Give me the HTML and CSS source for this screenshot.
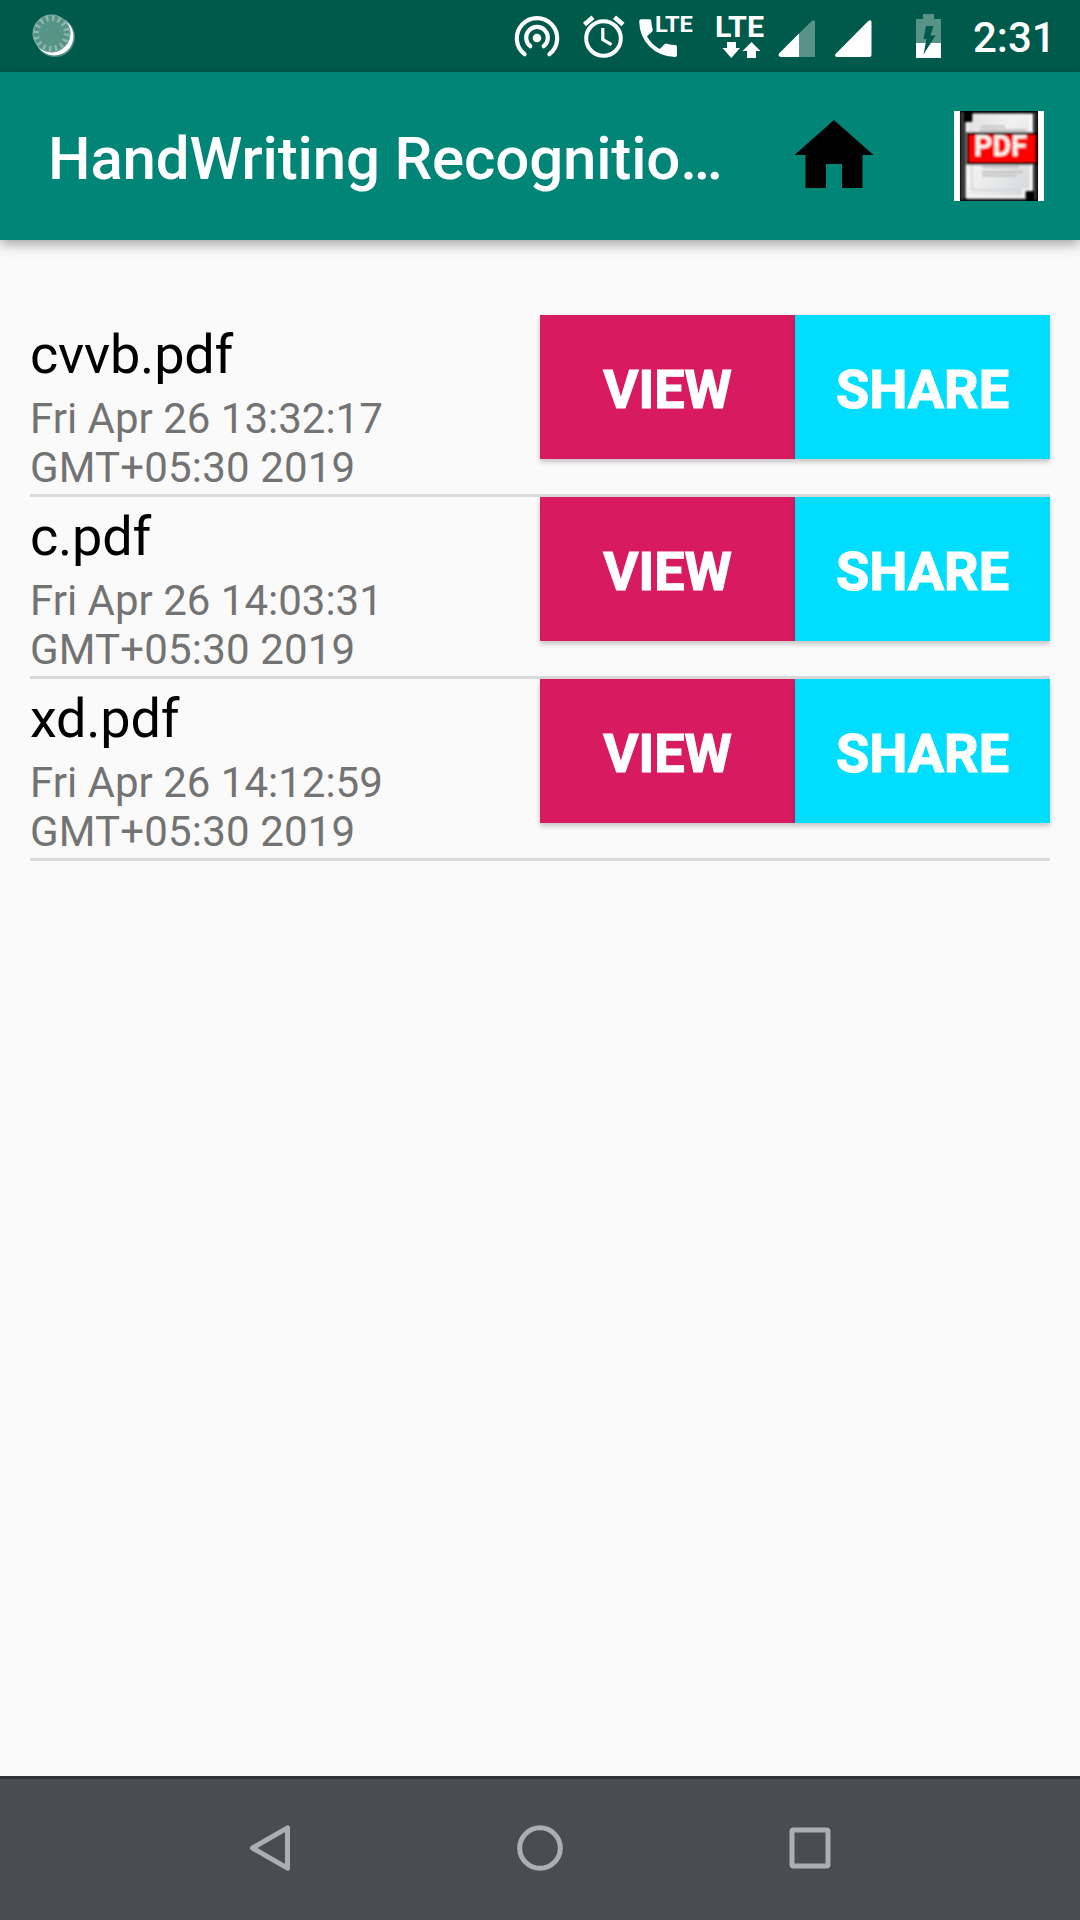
FILE: index.html
```html
<!DOCTYPE html>
<html lang="en">
<head>
<meta charset="utf-8">
<title>HandWriting Recognition</title>
<link rel="stylesheet" href="styles.css">
</head>
<body>
<div class="screen">
  <header class="status">
    <svg class="status-icons" viewBox="0 0 960 72" width="960" height="72" aria-hidden="true">
      <!-- sync spinner -->
      <circle cx="55" cy="37" r="20" fill="#4d8c80"/>
      <circle cx="54.3" cy="36.3" r="19.2" fill="#fff"/>
      <circle cx="51.5" cy="33.500" r="18.900" fill="#589387"/>
      <circle cx="51.5" cy="33.500" r="15.500" fill="none" stroke="#8db7ae" stroke-width="6" stroke-dasharray="2.4 3.69"/>
      <circle cx="51.5" cy="33.500" r="18.400" fill="none" stroke="#7ba99f" stroke-width="1"/>
      <!-- hotspot -->
      <g fill="none" stroke="#fff" stroke-width="4.2" stroke-linecap="round">
        <path d="M524.6 54.2A20.2 20.2 0 1 1 549.4 54.2"/>
        <path d="M530.3 46.2A10.8 10.8 0 1 1 543.7 46.2"/>
      </g>
      <circle cx="537" cy="38" r="4.3" fill="#fff"/>
      <!-- alarm -->
      <g fill="none" stroke="#fff">
        <circle cx="603.5" cy="38.5" r="17.3" stroke-width="4"/>
        <path d="M602.8 28V39.5L611.5 44.7" stroke-width="3.2"/>
        <path d="M584.5 24.5L593 17.2M614.5 17.2L623 24.5" stroke-width="4.6"/>
      </g>
      <!-- call over LTE -->
      <path fill="#fff" d="M641.2 19.3H649.5Q651.2 19.3 651.3 21Q651.5 25.5 652.7 29.3Q653 30.6 652 31.7L647 36.3Q651.3 44.6 659.7 49L664.7 44.1Q665.8 43.3 667 43.7Q671 45 675.3 45.1Q677 45.2 677 47V55Q677 57 675 57Q659.5 56.5 649.5 46.5Q639.5 36.5 639.2 21.3Q639.2 19.3 641.2 19.3Z"/>
      <text class="lte" x="654.9" y="32" font-size="22.5" textLength="38" lengthAdjust="spacingAndGlyphs">LTE</text>
      <!-- LTE data -->
      <text class="lte" x="715" y="37" font-size="29" textLength="49" lengthAdjust="spacingAndGlyphs">LTE</text>
      <path fill="#fff" d="M727 42H736V48H740L731.3 58L722.5 48H727ZM747 58V51H742.5L751.5 42L760.5 51H756V58Z"/>
      <!-- signals -->
      <path fill="#589387" d="M799 33.5L812 20.8Q815 19.5 815 22V57H799Z"/>
      <path fill="#fff" d="M799 33.5V57H781Q777.500 56 779 53.5ZM837 57Q833.500 56 836 53.500L868 21.200Q871.500 19 871.500 22V55Q871.500 57 869.500 57Z"/>
      <!-- battery -->
      <path fill="#589387" d="M923 14H934V19H941V43H916V19H923Z"/>
      <path fill="#fff" d="M916 43H941V58H916Z"/>
      <path fill="#005a4c" d="M926 26H933.500L930.500 35.500H935.500L923.500 54.500L926.500 39H923.500Z"/>
    </svg>
    <span class="clock">2:31</span>
  </header>

  <div class="appbar">
    <h1 class="title">HandWriting Recognitio…</h1>
    <svg class="home" viewBox="0 0 80 70" width="80" height="70" aria-label="Home">
      <path d="M40 0L79.500 35H68.500V68H48V44H32V68H11.500V35H0.500Z"/>
    </svg>
    <svg class="pdf" viewBox="0 0 90 90" width="90" height="90" aria-label="PDF files">
      <defs>
        <linearGradient id="page" x1="0" y1="0" x2="1" y2="1">
          <stop offset="0" stop-color="#dedede"/><stop offset=".4" stop-color="#f2f2f2"/><stop offset=".7" stop-color="#e4e5e6"/><stop offset="1" stop-color="#d4d6d7"/>
        </linearGradient>
        <filter id="soft" x="-5%" y="-5%" width="110%" height="110%"><feGaussianBlur stdDeviation=".8"/></filter>
      </defs>
      <path fill="#fff" d="M0 0H90V90H0Z"/>
      <path d="M6 0H84V90H6Z"/>
      <g filter="url(#soft)">
        <path fill="#484d4d" d="M7 1H9.500V89H7ZM80.500 1H82.500V89H80.500ZM12 87H72V89H12Z"/>
        <path fill="#fff" d="M18.500 2.500H79V80H71.500V87H11.500V11H18.500Z"/>
        <path fill="url(#page)" d="M20 4H76V78H69V85H14V12H20Z"/>
        <path fill="none" stroke="#cfd2d3" stroke-width="1.500" d="M18 54V79H65"/>
        <path stroke="#bbb" stroke-width="1.800" d="M27 15.500H51M26 19H72M28 56H65M28 61H69M28 64.500H62"/>
        <path d="M12 21H83V54H12Z"/>
        <path fill="#f00" d="M15 24H81.500V51H15Z"/>
        <text class="pdf-label" x="20" y="44.500" textLength="53" lengthAdjust="spacingAndGlyphs">PDF</text>
      </g>
    </svg>
  </div>

  <main class="files">
    <div class="row">
      <div class="info"><div class="name">cvvb.pdf</div><div class="date">Fri Apr 26 13:32:17 <span class="zone">GMT+05:30 2019</span></div></div>
      <button class="btn view">VIEW</button><button class="btn share">SHARE</button>
    </div>
    <div class="row">
      <div class="info"><div class="name">c.pdf</div><div class="date">Fri Apr 26 14:03:31 <span class="zone">GMT+05:30 2019</span></div></div>
      <button class="btn view">VIEW</button><button class="btn share">SHARE</button>
    </div>
    <div class="row">
      <div class="info"><div class="name">xd.pdf</div><div class="date">Fri Apr 26 14:12:59 <span class="zone">GMT+05:30 2019</span></div></div>
      <button class="btn view">VIEW</button><button class="btn share">SHARE</button>
    </div>
  </main>

  <nav class="navbar">
    <svg viewBox="0 0 60 60" width="60" height="60" aria-label="Back"><path d="M12.500 30L47.500 9.800V50.200Z"/></svg>
    <svg viewBox="0 0 60 60" width="60" height="60" aria-label="Home"><circle cx="30" cy="30" r="20.300"/></svg>
    <svg viewBox="0 0 60 60" width="60" height="60" aria-label="Recents"><rect x="12" y="12" width="36" height="36" rx="1.500"/></svg>
  </nav>
</div>
</body>
</html>
```
FILE: styles.css
```css
* { box-sizing: border-box; }

body {
  margin: 0;
  font-family: Roboto, sans-serif;
  background: #fafafa;
}

.screen {
  width: 1080px;
  height: 1920px;
  display: flex;
  flex-direction: column;
}

.status {
  height: 72px;
  flex: none;
  display: flex;
  align-items: center;
  background: #005a4c;
}

.status-icons { flex: none; }

.lte {
  font-family: Roboto, sans-serif;
  font-weight: 700;
  fill: #fff;
}

.clock {
  margin-left: 13px;
  padding-top: 4px;
  font-size: 42px;
  line-height: 50px;
  font-weight: 500;
  color: #fff;
}

.appbar {
  height: 168px;
  flex: none;
  display: flex;
  align-items: center;
  padding: 0 36px 0 48px;
  background: #008577;
  box-shadow: 0 4px 12px rgba(0, 0, 0, .36);
}

.title {
  width: 746px;
  margin: 0;
  padding-top: 5px;
  font-size: 60px;
  line-height: 70px;
  font-weight: 500;
  letter-spacing: -.16px;
  white-space: nowrap;
  color: #fff;
}

.home { margin-bottom: 3px; }

.pdf { margin-left: auto; }

.pdf-label {
  font-size: 29px;
  font-weight: 700;
  fill: #fff4f0;
}

.files {
  flex: 1;
  padding: 75px 30px 0;
}

.row {
  height: 182px;
  display: flex;
  align-items: flex-start;
  border-bottom: 3px solid #dadada;
}

.info {
  width: 510px;
  padding-top: 8px;
}

.name {
  font-size: 54px;
  line-height: 63px;
  letter-spacing: -.2px;
  color: #000;
}

.date {
  width: 400px;
  padding-top: 8px;
  font-size: 42px;
  line-height: 49px;
  color: #737373;
}

.zone {
  letter-spacing: .17px;
  white-space: nowrap;
}

.btn {
  width: 255px;
  height: 144px;
  padding: 4px 0 0;
  border: 0;
  font-family: inherit;
  font-size: 54px;
  font-weight: 700;
  -webkit-text-stroke: 1.2px #fff;
  color: #fff;
  box-shadow: 0 3px 5px rgba(0, 0, 0, .22);
}

.view { background: #d81b60; }

.share { background: #00ddff; }

.navbar {
  height: 144px;
  flex: none;
  display: flex;
  justify-content: center;
  gap: 210px;
  padding-top: 39px;
  border-top: 3px solid #2c3337;
  background: #464d53;
}

.navbar svg {
  fill: none;
  stroke: #a9afb2;
  stroke-width: 5;
  stroke-linejoin: round;
}
```
